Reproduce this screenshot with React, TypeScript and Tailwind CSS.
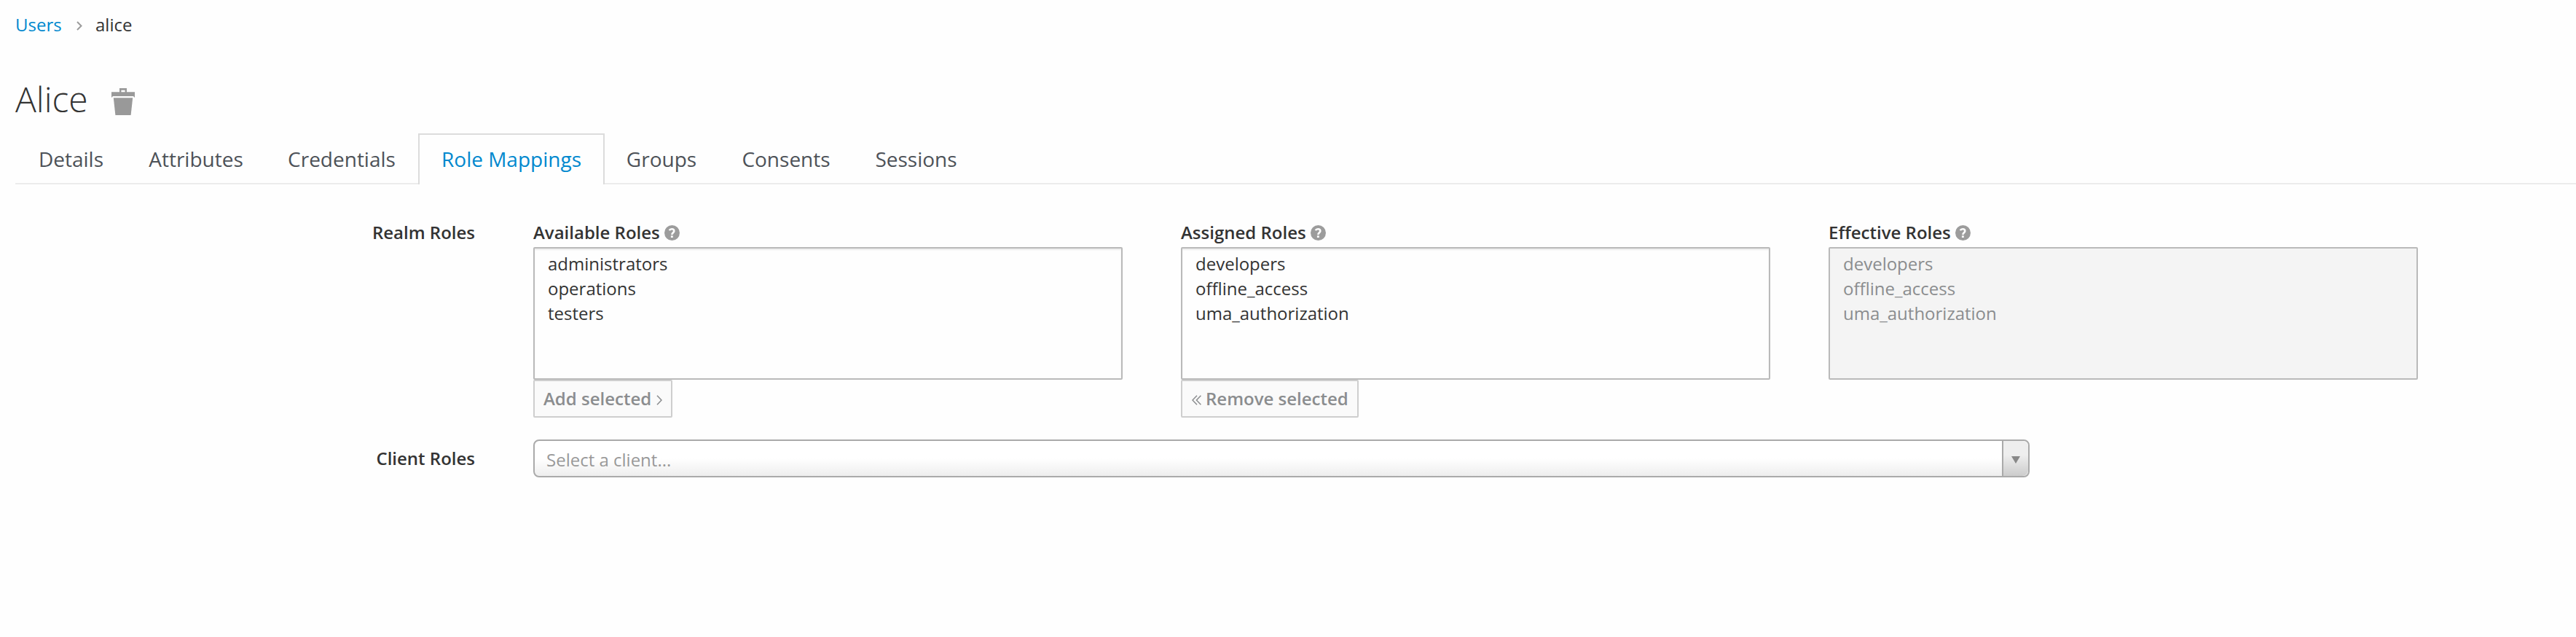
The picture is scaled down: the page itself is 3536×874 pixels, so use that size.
import type { ReactNode } from "react";

const tabs = [
  { label: "Details", width: "w-[153px]" },
  { label: "Attributes", width: "w-[190px]" },
  { label: "Credentials", width: "w-[210px]" },
  { label: "Role Mappings", width: "w-[256px]", active: true },
  { label: "Groups", width: "w-[156px]" },
  { label: "Consents", width: "w-[186px]" },
  { label: "Sessions", width: "w-[171px]" },
];

function HelpIcon() {
  return (
    <svg viewBox="0 0 21 21" className="size-[21px] shrink-0">
      <circle cx="10.5" cy="10.5" r="10.5" fill="#9c9c9c" />
      <path
        d="M6.8 7.2C7.5 5.8 8.6 5.2 10.1 5.2c1.9 0 3.2 1.1 3.2 2.7 0 2.3-2.9 2.4-2.9 5"
        fill="none"
        stroke="#fefefe"
        strokeWidth="2.6"
      />
      <rect x="8.9" y="14.2" width="2.9" height="2.8" rx="0.3" fill="#fefefe" />
    </svg>
  );
}

type RoleColumnProps = {
  title: string;
  roles: string[];
  disabled?: boolean;
  children?: ReactNode;
};

function RoleColumn({ title, roles, disabled, children }: RoleColumnProps) {
  return (
    <div className="flex w-[809px] flex-col items-start">
      <div className="mb-[3px] flex h-[34px] items-center gap-[6px] font-semibold">
        <span>{title}</span>
        <HelpIcon />
      </div>
      <ul
        className={
          disabled
            ? "h-[182px] w-full rounded-[2px] border-2 border-[#bababa] bg-[#f4f4f4] px-[18px] py-1 text-[#8b8d8f]"
            : "h-[182px] w-full rounded-[2px] border-2 border-[#bababa] px-[18px] py-1 shadow-[inset_0_2px_2px_rgba(3,3,3,0.075)]"
        }
      >
        {roles.map((role) => (
          <li key={role}>{role}</li>
        ))}
      </ul>
      {children}
    </div>
  );
}

const buttonClass =
  "flex h-[52px] items-center rounded-[2px] border-2 border-[#cecece] bg-[#fafafa] font-semibold text-[#8b8d8f]";

export default function App() {
  return (
    <div className="h-[874px] w-[3536px] overflow-hidden bg-[#fefefe] pt-[17px] pl-[21px] font-['Open_Sans',sans-serif] text-[24px] leading-[34px] text-[#333333]">
      <nav className="flex h-[34px] items-center">
        <a className="w-[84px] text-[#0088ce]">Users</a>
        <svg viewBox="0 0 8 13" className="mt-[3px] mr-[18px] h-[13px] w-2">
          <path d="M1 1l5.5 5.5L1 12" fill="none" stroke="#9c9c9c" strokeWidth="2" />
        </svg>
        <span>alice</span>
      </nav>

      <header className="mt-[55px] flex h-[60px] items-center">
        <h1 className="w-[132px] text-[48px] leading-[60px] font-light">Alice</h1>
        <svg viewBox="0 0 32 37" className="mt-[7px] h-[37px] w-8" fill="#999999">
          <path
            fillRule="evenodd"
            d="M11 0h10v5.3h11V13L30 11H2L0 13V5.3h11zM13.4 2.8v2.5h5.2V2.8z"
          />
          <path d="M2.8 13.2h26.4L26.6 37H5.4z" />
        </svg>
      </header>

      <div className="mt-[17px] flex h-[70px]">
        {tabs.map((tab) => (
          <button
            key={tab.label}
            className={
              tab.active
                ? `${tab.width} shrink-0 border-2 border-b-0 border-[#dcdcdc] pb-[2px] text-[28px] text-[#0088ce]`
                : `${tab.width} shrink-0 border-b-2 border-[#ececec] pt-[2px] text-[28px] text-[#4d5258]`
            }
          >
            {tab.label}
          </button>
        ))}
        <div className="grow border-b-2 border-[#ececec]" />
      </div>

      <section className="mt-[49px] flex">
        <div className="mr-[80px] w-[631px] text-right font-semibold">Realm Roles</div>
        <div className="flex gap-[80px]">
          <RoleColumn title="Available Roles" roles={["administrators", "operations", "testers"]}>
            <button className={`${buttonClass} gap-[7px] pr-[12px] pl-[12px]`}>
              <span>Add selected</span>
              <svg viewBox="0 0 8 14" className="mt-[3px] h-[14px] w-2">
                <path d="M1 0.8L7 7l-6 6.2" fill="none" stroke="#8b8d8f" strokeWidth="1.6" />
              </svg>
            </button>
          </RoleColumn>
          <RoleColumn title="Assigned Roles" roles={["developers", "offline_access", "uma_authorization"]}>
            <button className={`${buttonClass} gap-[6px] pr-[12px] pl-[13px]`}>
              <svg viewBox="0 0 13 14" className="mt-[3px] h-[14px] w-[13px]">
                <path d="M7 0.8L1 7l6 6.2M12.4 0.8L6.4 7l6 6.2" fill="none" stroke="#8b8d8f" strokeWidth="1.5" />
              </svg>
              <span>Remove selected</span>
            </button>
          </RoleColumn>
          <RoleColumn title="Effective Roles" roles={["developers", "offline_access", "uma_authorization"]} disabled />
        </div>
      </section>

      <section className="mt-[30px] flex">
        <div className="mt-[9px] mr-[80px] w-[631px] text-right font-semibold">Client Roles</div>
        <div className="flex h-[52px] w-[2054px] overflow-hidden rounded-[8px] border-2 border-[#aaaaaa] bg-linear-to-t from-[#eeeeee] to-white to-50%">
          <div className="grow pt-[9px] pl-4 text-[#999999]">Select a client...</div>
          <div className="flex w-[36px] items-center justify-center rounded-r-[8px] border-l-2 border-[#aaaaaa] bg-linear-to-t from-[#cccccc] to-[#eeeeee] to-60%">
            <svg viewBox="0 0 12 10" className="mt-[4px] h-[10px] w-3">
              <path d="M0 0h12L6 10z" fill="#888888" />
            </svg>
          </div>
        </div>
      </section>
    </div>
  );
}
